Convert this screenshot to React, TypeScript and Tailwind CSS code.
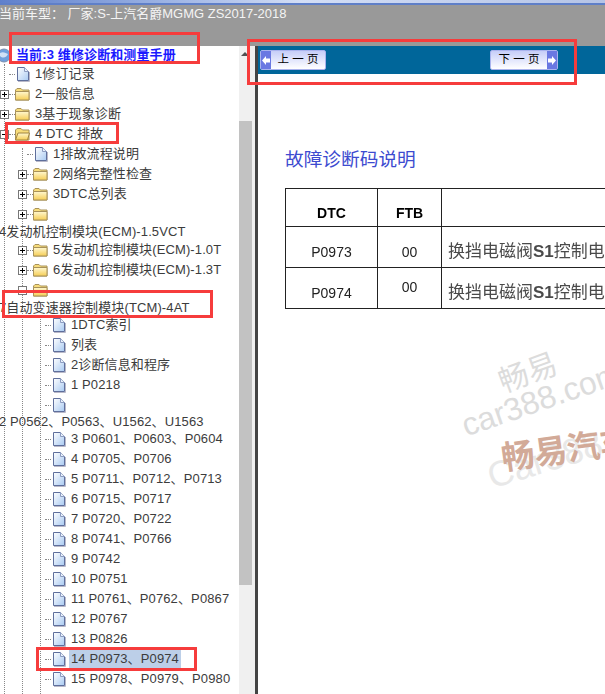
const CJK = "font-['Liberation_Sans','Noto_Sans_CJK_SC',sans-serif]";

type RowKind = "doc" | "closed" | "open";
type Row = {
  level?: 0 | 1 | 2;
  kind?: RowKind;
  toggle?: "+" | "-";
  label?: string;
  height?: string;
  selected?: boolean;
  // wrapped rows: the text dropped under its icon and starts at the pane's edge
  wrapped?: string;
};

const rows: Row[] = [
  { level: 0, kind: "doc", label: "1修订记录" },
  { level: 0, kind: "closed", toggle: "+", label: "2一般信息" },
  { level: 0, kind: "closed", toggle: "+", label: "3基于现象诊断" },
  { level: 0, kind: "open", toggle: "-", label: "4 DTC 排故" },
  { level: 1, kind: "doc", label: "1排故流程说明" },
  { level: 1, kind: "closed", toggle: "+", label: "2网络完整性检查" },
  { level: 1, kind: "closed", toggle: "+", label: "3DTC总列表" },
  { level: 1, kind: "closed", toggle: "+" },
  { wrapped: "4发动机控制模块(ECM)-1.5VCT", height: "h-4" },
  { level: 1, kind: "closed", toggle: "+", label: "5发动机控制模块(ECM)-1.0T" },
  { level: 1, kind: "closed", toggle: "+", label: "6发动机控制模块(ECM)-1.3T" },
  { level: 1, kind: "closed", toggle: "-" },
  { wrapped: "7自动变速器控制模块(TCM)-4AT", height: "h-[15px]" },
  { level: 2, kind: "doc", label: "1DTC索引" },
  { level: 2, kind: "doc", label: "列表" },
  { level: 2, kind: "doc", label: "2诊断信息和程序" },
  { level: 2, kind: "doc", label: "1 P0218" },
  { level: 2, kind: "doc" },
  { wrapped: "2 P0562、P0563、U1562、U1563", height: "h-[14px]" },
  { level: 2, kind: "doc", label: "3 P0601、P0603、P0604" },
  { level: 2, kind: "doc", label: "4 P0705、P0706" },
  { level: 2, kind: "doc", label: "5 P0711、P0712、P0713" },
  { level: 2, kind: "doc", label: "6 P0715、P0717" },
  { level: 2, kind: "doc", label: "7 P0720、P0722" },
  { level: 2, kind: "doc", label: "8 P0741、P0766" },
  { level: 2, kind: "doc", label: "9 P0742" },
  { level: 2, kind: "doc", label: "10 P0751" },
  { level: 2, kind: "doc", label: "11 P0761、P0762、P0867" },
  { level: 2, kind: "doc", label: "12 P0767" },
  { level: 2, kind: "doc", label: "13 P0826" },
  { level: 2, kind: "doc", label: "14 P0973、P0974", selected: true },
  { level: 2, kind: "doc", label: "15 P0978、P0979、P0980" },
];

const indent = { 0: "pl-0", 1: "pl-[18px]", 2: "pl-[36px]" };

function DocIcon() {
  return (
    <svg width="14" height="16" viewBox="0 0 14 16" className="shrink-0">
      <defs>
        <linearGradient id="doc" x1="0" y1="0" x2="1" y2="1">
          <stop offset="0" stopColor="#ffffff" />
          <stop offset="1" stopColor="#a9caf2" />
        </linearGradient>
      </defs>
      <path d="M1.5 1.5h7l4 4v9h-11z" fill="url(#doc)" stroke="#5f6f9c" />
      <path d="M8.5 1.5v4h4" fill="#e8f0fb" stroke="#8d9cc0" />
      <path d="M2 15.5h11.5V6" fill="none" stroke="#b9b9c9" />
    </svg>
  );
}

function FolderIcon({ open }: { open?: boolean }) {
  return (
    <svg width="15" height="14" viewBox="0 0 15 14" className="shrink-0">
      <defs>
        <linearGradient id="folder" x1="0" y1="0" x2="0" y2="1">
          <stop offset="0" stopColor="#fff8d0" />
          <stop offset="1" stopColor="#f5cd55" />
        </linearGradient>
      </defs>
      <path d="M.5 3 2 1.5h4L7.5 3h6.5v10H.5z" fill="#f7dc7a" stroke="#a8925a" />
      {open ? (
        <path d="M.5 13 3 6h11.5L12.5 13z" fill="url(#folder)" stroke="#a08440" />
      ) : (
        <path d="M.5 4.5h13.5V13H.5z" fill="url(#folder)" stroke="#a8925a" />
      )}
    </svg>
  );
}

function Toggle({ sign }: { sign: "+" | "-" }) {
  return (
    <svg width="9" height="9" viewBox="0 0 9 9" className="relative z-10 shrink-0">
      <rect x=".5" y=".5" width="8" height="8" fill="#fff" stroke="#777" />
      <path d="M2 4.5h5" stroke="#000" />
      {sign === "+" && <path d="M4.5 2v5" stroke="#000" />}
    </svg>
  );
}

function TreeRow({ row }: { row: Row }) {
  if (row.wrapped) {
    return (
      <div className={`relative z-10 flex items-center whitespace-nowrap ${row.height}`}>
        <span className="-ml-px">{row.wrapped}</span>
      </div>
    );
  }
  const level = row.level ?? 0;
  return (
    <div className={`flex h-5 items-center whitespace-nowrap ${indent[level]}`}>
      <div className="flex w-[9px] shrink-0 justify-center">{row.toggle && <Toggle sign={row.toggle} />}</div>
      <div className="w-[6px] shrink-0 border-t border-dotted border-[#888]" />
      <div className="flex w-[15px] shrink-0 justify-center">
        {row.kind === "doc" ? <DocIcon /> : <FolderIcon open={row.kind === "open"} />}
      </div>
      {row.label && (
        <span className={`ml-[3px] px-[2px] leading-[18px] ${row.selected ? "bg-[#bccfe8]" : ""}`}>{row.label}</span>
      )}
    </div>
  );
}

function NavButton({ label, dir }: { label: string; dir: "prev" | "next" }) {
  const arrow = (
    <div className="flex w-[10px] items-center justify-center self-stretch bg-[#6a78e2]">
      <svg width="8" height="9" viewBox="0 0 8 9">
        <path d={dir === "prev" ? "M0 4.5 4 0v2.5h4v4H4V9z" : "M8 4.5 4 0v2.5H0v4h4V9z"} fill="#fff" />
      </svg>
    </div>
  );
  return (
    <div
      className={`flex h-5 items-center rounded-[2px] border border-[#a9b3ee] bg-gradient-to-b from-[#c6cdf8] to-white text-[11.5px] text-black ${dir === "prev" ? "w-[66px]" : "w-[68px]"}`}
    >
      {dir === "prev" && arrow}
      <span className="flex-1 text-center whitespace-pre">{label}</span>
      {dir === "next" && arrow}
    </div>
  );
}

function Annot({ className }: { className: string }) {
  return <div className={`pointer-events-none absolute z-20 border-[3px] border-[#f63c3c] ${className}`} />;
}

export default function App() {
  return (
    <div className={`relative flex h-[694px] w-[605px] flex-col overflow-hidden bg-white text-[13px] text-[#3c3c3c] ${CJK}`}>
      <header className="h-[46px] shrink-0 bg-[#999999]">
        <div className="h-[3px] bg-gradient-to-r from-[#5f80cc] via-[#d3def6] to-[#b5c4e6]" />
        <div className="h-[2px] bg-[#5f7fc8]" />
        <div className="-ml-[1px] mt-px text-[13px] leading-4 whitespace-pre text-[#f4f4f4]">当前车型： 厂家:S-上汽名爵MGMG ZS2017-2018</div>
      </header>

      <div className="flex min-h-0 flex-1">
        <aside className="flex w-[255px] shrink-0">
          <div className="relative w-[239px] shrink-0 overflow-hidden tracking-[0.12px]">
            <div className="absolute top-[18px] bottom-0 left-1 border-l border-dotted border-[#888]" />
            <div className="absolute top-[102px] bottom-0 left-[22px] border-l border-dotted border-[#888]" />
            <div className="absolute top-[270px] bottom-0 left-[40px] border-l border-dotted border-[#888]" />
            <div className="relative flex h-[18px] items-center bg-white">
              <svg width="11" height="15" viewBox="0 0 11 15" className="shrink-0">
                <circle cx="4" cy="7.5" r="6.5" fill="#6f9fdc" stroke="#7c8fae" />
                <path d="M0 5c3-2 6 0 8 1-1 3-5 5-8 2z" fill="#cfe0f5" />
              </svg>
              <span className="ml-[5px] font-bold text-[#1a1aff]">当前:3 维修诊断和测量手册</span>
            </div>
            {rows.map((row, i) => (
              <TreeRow key={i} row={row} />
            ))}
          </div>
          <div className="flex w-4 shrink-0 flex-col bg-[#f0f0f0]">
            <div className="flex h-[75px] justify-center pt-[6px] pr-[4px]">
              <div className="h-0 w-0 border-x-[4px] border-b-[4px] border-x-transparent border-b-[#505050]" />
            </div>
            <div className="h-[464px] w-[13px] bg-[#c2c2c2]" />
          </div>
        </aside>

        <div className="w-[3px] shrink-0 bg-[#444444]" />

        <main className="relative min-w-0 flex-1 overflow-hidden">
          <div className="flex h-7 items-center justify-between bg-[#00669a] pr-[47px] pl-[2px]">
            <NavButton dir="prev" label="上 一 页" />
            <NavButton dir="next" label="下 一 页" />
          </div>

          <h1 className="mt-[74px] ml-[27px] text-[18.7px] leading-6 font-normal text-[#3d4bd0]">故障诊断码说明</h1>

          <table className="mt-[16px] ml-[27px] w-[500px] table-fixed border-collapse border border-[#222] text-sm text-[#222] blur-[0.3px]">
            <colgroup>
              <col className="w-[92px]" />
              <col className="w-[64px]" />
              <col />
            </colgroup>
            <tbody>
              <tr className="h-[38px] font-bold text-black">
                <td className="border border-[#222] pt-[10px] text-center">DTC</td>
                <td className="border border-[#222] pt-[10px] text-center">FTB</td>
                <td className="border border-[#222]" />
              </tr>
              <tr className="h-[41px]">
                <td className="border border-[#222] pt-[9px] text-center">P0973</td>
                <td className="border border-[#222] pt-[9px] text-center">00</td>
                <td className="border border-[#222] pt-[10px] pl-[6px] text-[17px] whitespace-nowrap text-[#4a4a4a]">
                  换挡电磁阀<span className="font-bold">S1</span>控制电路低
                </td>
              </tr>
              <tr className="h-[41px]">
                <td className="border border-[#222] pt-[9px] text-center">P0974</td>
                <td className="border border-[#222] pb-[3px] text-center">00</td>
                <td className="border border-[#222] pt-[10px] pl-[6px] text-[17px] whitespace-nowrap text-[#4a4a4a]">
                  换挡电磁阀<span className="font-bold">S1</span>控制电路高
                </td>
              </tr>
            </tbody>
          </table>

          <div className="absolute top-[312px] left-[240px] -rotate-[20deg] text-[30px] leading-none whitespace-nowrap text-[#dcdcdc]">畅易</div>
          <div className="absolute top-[337px] left-[200px] -rotate-[19deg] text-[32px] leading-none whitespace-nowrap text-[#dcdcdc]">car388.com</div>
          <div className="absolute top-[396px] left-[228px] -rotate-[17deg] text-[36px] leading-none whitespace-nowrap text-[#e8e8e8]">Car388</div>
          <div className="absolute top-[387px] left-[243px] -rotate-[8deg] text-[33px] leading-none font-bold whitespace-nowrap text-[#d2aa98]">畅易汽车</div>
        </main>
      </div>

      <Annot className="top-[32px] left-[9px] h-[32px] w-[191px]" />
      <Annot className="top-[39px] left-[247px] h-[46px] w-[330px]" />
      <Annot className="top-[122px] left-[5px] h-[22px] w-[114px]" />
      <Annot className="top-[290px] left-[2px] h-[28px] w-[211px]" />
      <Annot className="top-[647px] left-[36px] h-[24px] w-[161px]" />
    </div>
  );
}
